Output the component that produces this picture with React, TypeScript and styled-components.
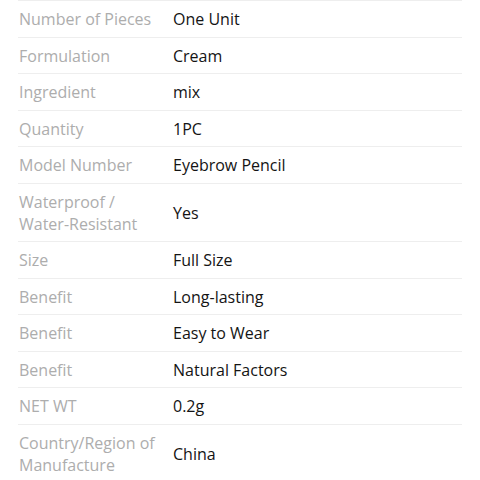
import React from "react";
import styled, { createGlobalStyle } from "styled-components";

const Global = createGlobalStyle`
  html, body { margin: 0; padding: 0; background: #fff; }
  body { font-family: "Open Sans", "Noto Sans", sans-serif; }
`;

const Table = styled.div`
  margin: 0 18px;
  width: 444px;
  display: flex;
  flex-direction: column;
`;

const Row = styled.div`
  display: grid;
  grid-template-columns: 155px 1fr;
  align-items: center;
  border-top: 1px solid #eeeeee;
  padding: 7px 0 6.5px;
  font-size: 16px;
  line-height: 22px;
`;

const Label = styled.div`
  color: #adadad;
  padding: 0 8px 0 1px;
`;

const Value = styled.div`
  color: #141414;
`;

const rows: [string, string][] = [
  ["Number of Pieces", "One Unit"],
  ["Formulation", "Cream"],
  ["Ingredient", "mix"],
  ["Quantity", "1PC"],
  ["Model Number", "Eyebrow Pencil"],
  ["Waterproof / Water-Resistant", "Yes"],
  ["Size", "Full Size"],
  ["Benefit", "Long-lasting"],
  ["Benefit", "Easy to Wear"],
  ["Benefit", "Natural Factors"],
  ["NET WT", "0.2g"],
  ["Country/Region of Manufacture", "China"],
];

export default function App() {
  return (
    <>
      <Global />
      <Table>
        {rows.map(([k, v], i) => (
          <Row key={i}>
            <Label>{k}</Label>
            <Value>{v}</Value>
          </Row>
        ))}
      </Table>
    </>
  );
}
